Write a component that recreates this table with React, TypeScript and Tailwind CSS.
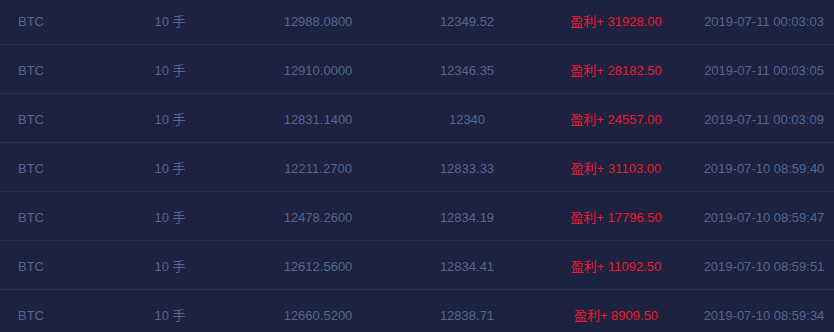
import React from 'react';

// 成交记录
const rows = [
  { sym: 'BTC', lots: '10 手', open: '12988.0800', close: '12349.52', profit: '31928.00', time: '2019-07-11 00:03:03' },
  { sym: 'BTC', lots: '10 手', open: '12910.0000', close: '12346.35', profit: '28182.50', time: '2019-07-11 00:03:05' },
  { sym: 'BTC', lots: '10 手', open: '12831.1400', close: '12340', profit: '24557.00', time: '2019-07-11 00:03:09' },
  { sym: 'BTC', lots: '10 手', open: '12211.2700', close: '12833.33', profit: '31103.00', time: '2019-07-10 08:59:40' },
  { sym: 'BTC', lots: '10 手', open: '12478.2600', close: '12834.19', profit: '17796.50', time: '2019-07-10 08:59:47' },
  { sym: 'BTC', lots: '10 手', open: '12612.5600', close: '12834.41', profit: '11092.50', time: '2019-07-10 08:59:51' },
  { sym: 'BTC', lots: '10 手', open: '12660.5200', close: '12838.71', profit: '8909.50', time: '2019-07-10 08:59:34' },
];

export default function App() {
  return (
    <div
      className="w-[834px] h-[332px] overflow-hidden bg-[#1c2240] text-[13px] text-[#56668f]"
      style={{ fontFamily: '"Liberation Sans", "Noto Sans CJK SC", sans-serif' }}
    >
      <div className="-mt-[4px]">
        {rows.map((r, i) => (
          <div
            key={i}
            className="grid grid-cols-[100px_140px_156px_142px_156px_140px] h-[49px] pt-[4px] items-center border-b border-[#2a3150] whitespace-nowrap"
          >
            <div className="pl-[18px]">{r.sym}</div>
            <div className="text-center">{r.lots}</div>
            <div className="text-center">{r.open}</div>
            <div className="text-center">{r.close}</div>
            <div className="text-center text-[#f0182d]">盈利+ {r.profit}</div>
            <div className="text-center">{r.time}</div>
          </div>
        ))}
      </div>
    </div>
  );
}
